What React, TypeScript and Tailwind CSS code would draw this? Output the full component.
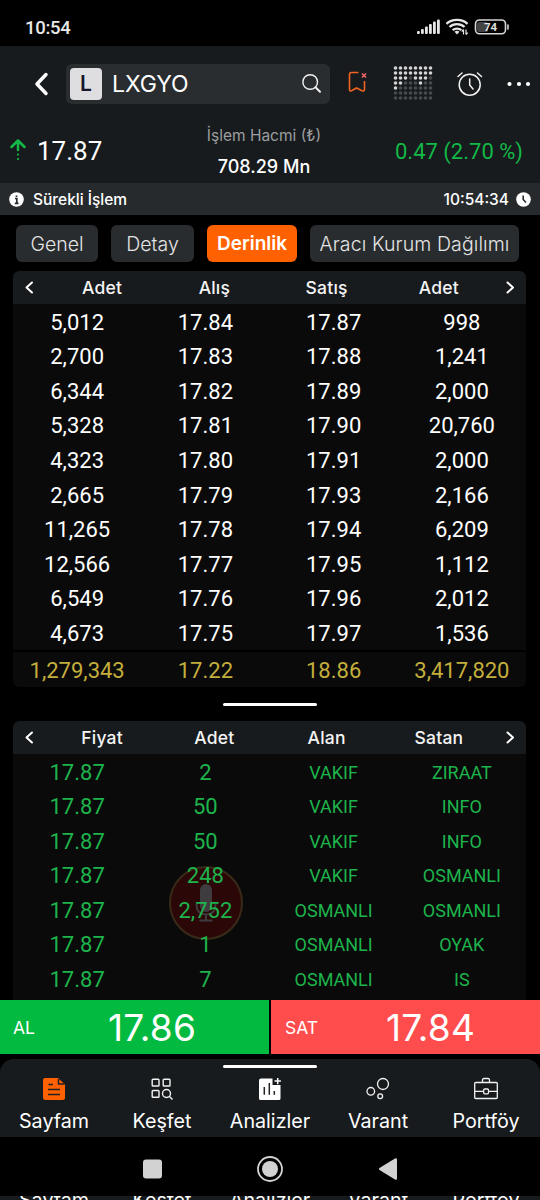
import React from "react";

const bids: string[][] = [
  ["5,012", "17.84", "17.87", "998"],
  ["2,700", "17.83", "17.88", "1,241"],
  ["6,344", "17.82", "17.89", "2,000"],
  ["5,328", "17.81", "17.90", "20,760"],
  ["4,323", "17.80", "17.91", "2,000"],
  ["2,665", "17.79", "17.93", "2,166"],
  ["11,265", "17.78", "17.94", "6,209"],
  ["12,566", "17.77", "17.95", "1,112"],
  ["6,549", "17.76", "17.96", "2,012"],
  ["4,673", "17.75", "17.97", "1,536"],
];

const trades: string[][] = [
  ["17.87", "2", "VAKIF", "ZIRAAT"],
  ["17.87", "50", "VAKIF", "INFO"],
  ["17.87", "50", "VAKIF", "INFO"],
  ["17.87", "248", "VAKIF", "OSMANLI"],
  ["17.87", "2,752", "OSMANLI", "OSMANLI"],
  ["17.87", "1", "OSMANLI", "OYAK"],
  ["17.87", "7", "OSMANLI", "IS"],
];

const dots = ["11111111", "11111111", "11101110", "11000100", "10000000", "00000000", "00000000"];

function StatusIcons() {
  return (
    <svg width="96" height="20" viewBox="0 0 96 20" fill="none">
      <g fill="#e6e6e6">
        <rect x="1" y="14" width="2.800" height="3" rx="1" />
        <rect x="5" y="12" width="2.800" height="5" rx="1" />
        <rect x="9" y="9.5" width="2.800" height="7.500" rx="1" />
        <rect x="13" y="7" width="2.800" height="10" rx="1" />
        <rect x="17" y="4.5" width="2.800" height="12.500" rx="1" />
        <rect x="21" y="2.5" width="2.800" height="14.500" rx="1" />
      </g>
      <g stroke="#e6e6e6" strokeWidth="2.300">
        <path d="M30.500 6.800C36 1.600 46 1.600 51.500 6.800" />
        <path d="M33.500 10C37.500 6.200 44.500 6.200 48.500 10" />
        <path d="M36.700 13.200C39 11 43 11 45.300 13.200" />
      </g>
      <path d="M38.500 14.700Q41 13 43.500 14.700L41 17.500Z" fill="#e6e6e6" />
      <path d="M47.500 12.500V17.500M47.500 12.500L45.700 14.600M50 12.500V17.500M50 17.500L51.700 15.600" stroke="#e6e6e6" strokeWidth="1.200" />
      <rect x="61" y="5" width="11" height="10" rx="2" fill="#444" />
      <rect x="59.500" y="3" width="30" height="13.800" rx="4" stroke="#d6d6d6" strokeWidth="1.600" />
      <path d="M92 8V12" stroke="#d6d6d6" strokeWidth="1.600" strokeLinecap="round" />
      <text x="74.500" y="14" textAnchor="middle" fontSize="11.500" fontWeight="600" fontFamily="Roboto, sans-serif" fill="#e6e6e6">74</text>
    </svg>
  );
}

function Chevron({ right = false }: { right?: boolean }) {
  return (
    <svg width="9" height="13" viewBox="0 0 9 13" fill="none" stroke="#fff" strokeWidth="2" strokeLinecap="round" strokeLinejoin="round">
      <path d={right ? "M1.500 1.500L7 6.500L1.500 11.500" : "M7 1.500L1.500 6.500L7 11.500"} />
    </svg>
  );
}

function TableHeader({ labels }: { labels: string[] }) {
  return (
    <div className="flex h-[33px] items-center rounded-t-[6px] bg-[#171b1e]">
      <div className="flex w-[33px] justify-center"><Chevron /></div>
      <div className="grid flex-1 grid-cols-4 pt-px text-center font-['Inter',sans-serif] text-[17.5px] font-medium leading-[24px] tracking-[0.2px] text-[#f4f4f4]">
        {labels.map((l, i) => <span key={i}>{l}</span>)}
      </div>
      <div className="flex w-[31px] justify-center"><Chevron right /></div>
    </div>
  );
}

function NavIcon({ name }: { name: string }) {
  const p = { width: 26, height: 26, viewBox: "0 0 26 26", fill: "none" } as const;
  if (name === "Sayfam")
    return (
      <svg {...p}>
        <path d="M4 2H17L24 8.500V21.500Q24 24 21.500 24H4.500Q2 24 2 21.500V4Q2 2 4 2Z" fill="#ff6100" />
        <path d="M17.500 3V8H23.500M7.500 8.500H12M7 13.500H19M7 18.500H19" stroke="#202124" strokeWidth="1.500" />
      </svg>
    );
  if (name === "Keşfet")
    return (
      <svg {...p} stroke="#f2f2f2" strokeWidth="1.400">
        <rect x="3.200" y="3.200" width="6.800" height="6.800" rx="0.800" />
        <rect x="14.200" y="3.200" width="6.800" height="6.800" rx="0.800" />
        <rect x="3.200" y="14.500" width="6.800" height="6.800" rx="0.800" />
        <circle cx="17.500" cy="17.500" r="4" />
        <path d="M20.300 20.300L23.500 23.500" />
      </svg>
    );
  if (name === "Analizler")
    return (
      <svg {...p}>
        <path d="M4 2.500H15.500V9H23.500V22.500Q23.500 24 22 24H3.500Q2 24 2 22.500V4.500Q2 2.500 4 2.500Z" fill="#fff" />
        <path d="M7.300 11V18.700M12.300 7V18.700M17.300 15V18.700" stroke="#202427" strokeWidth="1.500" />
        <path d="M20.700 2V8.200M17.500 5.100H23.900" stroke="#fff" strokeWidth="1.500" />
      </svg>
    );
  if (name === "Varant")
    return (
      <svg {...p} stroke="#f2f2f2" strokeWidth="1.300">
        <circle cx="18" cy="8" r="5.500" />
        <circle cx="5.800" cy="15.300" r="3.800" />
        <circle cx="15.200" cy="20.300" r="2.400" />
      </svg>
    );
  return (
    <svg {...p} stroke="#f2f2f2" strokeWidth="1.300">
      <rect x="1.700" y="6.500" width="22.600" height="16" rx="1" />
      <path d="M9.500 6.500V4Q9.500 2.500 11 2.500H15Q16.500 2.500 16.500 4V6.500M2 15.300H10.500M15.500 15.300H24" />
      <rect x="10.700" y="13" width="4.800" height="4.800" rx="1" />
    </svg>
  );
}

const nav = ["Sayfam", "Keşfet", "Analizler", "Varant", "Portföy"];

export default function App() {
  return (
    <div className="flex h-[1200px] w-[540px] flex-col overflow-hidden bg-black font-['Roboto',sans-serif] text-white">
      <div className="flex h-[46px] shrink-0 items-center justify-between bg-black pl-[25px] pr-[28px] pt-[8px]">
        <span className="pt-px text-[18.500px] font-medium leading-[22px] tracking-[-0.3px] text-[#e8e8e8]">10:54</span>
        <StatusIcons />
      </div>

      <header className="flex h-[137px] shrink-0 flex-col bg-[#171b1e]">
        <div className="flex h-[75px] items-center">
          <svg className="ml-[33px] mr-[17px]" width="16" height="26" viewBox="0 0 16 26" fill="none" stroke="#fff" strokeWidth="3.500" strokeLinecap="round" strokeLinejoin="round">
            <path d="M13 3.500L4 13L13 22.500" />
          </svg>
          <div className="flex h-[40px] w-[264px] items-center rounded-[6px] bg-[#292d30] pl-[4px] pr-[8px]">
            <div className="flex size-[32px] items-center justify-center rounded-[4px] bg-[#dedee0] font-['Inter',sans-serif] text-[21px] font-semibold leading-none text-[#15152b]">L</div>
            <span className="ml-[10px] flex-1 font-['Inter',sans-serif] text-[23px] leading-[30px] tracking-[-0.1px]">LXGYO</span>
            <svg width="21" height="21" viewBox="0 0 21 21" fill="none" stroke="#f2f2f2">
              <circle cx="9.200" cy="9" r="7.300" strokeWidth="1.400" />
              <path d="M14.500 14.300L19 18.700" strokeWidth="2" strokeLinecap="round" />
            </svg>
          </div>
          <svg className="ml-[17px] mt-[-3px]" width="22" height="24" viewBox="0 0 22 24" fill="none">
            <path d="M11.500 2.500H4.500Q2.500 2.500 2.500 4.500V19.500Q2.500 21.500 4.500 20.700L9.500 18L15 20.700Q17.500 21.500 17.500 19.500V11" stroke="#ee6420" strokeWidth="1.600" />
            <path d="M15 3.500L19 7.500M19 3.500L15 7.500" stroke="#ee6666" strokeWidth="1.600" />
          </svg>
          <svg className="ml-[24px] mt-[-1px]" width="40" height="36" viewBox="0 0 40 36">
            {dots.flatMap((row, y) => row.split("").map((d, x) => (
              <circle key={`${x}-${y}`} cx={2.5 + x * 5} cy={3 + y * 5} r="1.800" fill={d === "1" ? "#d4d4d4" : "#484b4d"} />
            )))}
          </svg>
          <svg className="ml-[23px]" width="28" height="28" viewBox="0 0 28 28" fill="none" stroke="#f2f2f2" strokeWidth="1.500" strokeLinecap="round">
            <circle cx="13.700" cy="14.700" r="10.500" />
            <path d="M13.700 9V15L17 19M2 6.500L6 3M25.500 6.500L21.500 3" />
          </svg>
          <svg className="ml-[22px]" width="26" height="6" viewBox="0 0 26 6" fill="#fff">
            <circle cx="3.500" cy="3" r="2.100" /><circle cx="13" cy="3" r="2.100" /><circle cx="22" cy="3" r="2.100" />
          </svg>
        </div>
        <div className="grid h-[62px] grid-cols-[190px_148px_1fr] items-center">
          <div className="flex items-center pb-[3px]">
            <svg className="ml-[9px] mr-[10px]" width="18" height="24" viewBox="0 0 18 24" fill="none" stroke="#13b847" strokeWidth="2.500" strokeLinecap="round" strokeLinejoin="round">
              <path d="M2.500 8L9 1.500L15.500 8M9 2V11" /><path d="M9 15.500V15.600M9 20V20.100" strokeWidth="2.200" />
            </svg>
            <span className="text-[26px] leading-[30px]">17.87</span>
          </div>
          <div className="flex flex-col items-center pt-[3px] font-['Inter',sans-serif]">
            <span className="h-[31px] text-[15.500px] leading-[24px] text-[#9c9e9f]">İşlem Hacmi (₺)</span>
            <span className="h-[29px] text-[18px] font-medium leading-[24px]">708.29 Mn</span>
          </div>
          <span className="pb-[2px] pr-[17px] text-right text-[22px] leading-[28px] text-[#13b847]">0.47 (2.70 %)</span>
        </div>
      </header>

      <div className="flex h-[32px] shrink-0 items-center bg-[#272a2d] px-[9px] font-['Inter',sans-serif] text-[15.500px] font-medium leading-[24px]">
        <svg width="15" height="15" viewBox="0 0 15 15"><circle cx="7.500" cy="7.500" r="7.300" fill="#fff" /><path d="M7.500 3.400V4.900M6 6.500H7.800V11.200M5.800 11.300H9.500" stroke="#272a2d" strokeWidth="1.700" fill="none" /></svg>
        <span className="ml-[9px] flex-1 pt-[2px]">Sürekli İşlem</span>
        <span className="pt-[2px]">10:54:34</span>
        <svg className="ml-[7px]" width="15" height="15" viewBox="0 0 15 15"><circle cx="7.500" cy="7.500" r="7.300" fill="#fff" /><path d="M7.200 3.500V7.500L10 10.500" stroke="#272a2d" strokeWidth="1.600" fill="none" /></svg>
      </div>

      <div className="flex h-[56px] shrink-0 items-center pl-[16px] font-['Inter',sans-serif] text-[19.500px] font-light leading-[24px] text-[#e4e4e4]">
        <button className="h-[37px] w-[82px] rounded-[6px] bg-[#292c2f] pt-[2px]">Genel</button>
        <button className="ml-[13px] h-[37px] w-[83px] rounded-[6px] bg-[#292c2f] pt-[2px]">Detay</button>
        <button className="ml-[13px] h-[37px] w-[90px] rounded-[6px] bg-[#ff6100] pt-[2px] text-[19px] font-semibold text-white">Derinlik</button>
        <button className="ml-[13px] h-[37px] w-[209px] whitespace-nowrap rounded-[6px] bg-[#292c2f] pt-[2px] tracking-[0.1px]">Aracı Kurum Dağılımı</button>
      </div>

      <section className="ml-[13px] flex h-[416px] w-[513px] shrink-0 flex-col overflow-hidden rounded-[6px] bg-[#0a0a0a]">
        <TableHeader labels={["Adet", "Alış", "Satış", "Adet"]} />
        <div className="flex h-[346px] flex-col pt-[1.500px]">
          {bids.map((r, i) => (
            <div key={i} className="grid h-[34.550px] shrink-0 grid-cols-4 items-center text-center text-[22px] leading-[26px]">
              {r.map((c, j) => <span key={j}>{c}</span>)}
            </div>
          ))}
        </div>
        <div className="grid h-[37px] grid-cols-4 items-center border-t-2 border-black pt-[2px] text-center text-[22px] leading-[26px] text-[#c4ae3c]">
          <span>1,279,343</span><span>17.22</span><span>18.86</span><span>3,417,820</span>
        </div>
      </section>

      <div className="flex h-[34px] shrink-0 items-center justify-center">
        <div className="h-[3px] w-[94px] rounded-full bg-white" />
      </div>

      <section className="relative ml-[13px] h-[279px] w-[513px] shrink-0 overflow-hidden rounded-t-[6px] bg-[#0a0a0a]">
        <div className="absolute left-[156px] top-[145px] size-[74px]">
          <svg width="74" height="74" viewBox="0 0 74 74" fill="none">
            <circle cx="37" cy="37" r="36" fill="#2b0708" stroke="#382b18" strokeWidth="2" />
            <rect x="31" y="18" width="12" height="28" rx="6" fill="#3f3c40" />
            <path d="M27.500 38V39Q28 48.500 37 48.500Q46 48.500 46.500 39V38M37 49V54M30.500 54.500H43.500" stroke="#3f3c40" strokeWidth="2" />
          </svg>
        </div>
        <TableHeader labels={["Fiyat", "Adet", "Alan", "Satan"]} />
        <div className="relative flex flex-col pt-[1.500px] text-[#1eb44c]">
          {trades.map((r, i) => (
            <div key={i} className="grid h-[34.500px] shrink-0 grid-cols-4 items-center text-center text-[22px] leading-[26px]">
              <span>{r[0]}</span><span>{r[1]}</span>
              <span className="text-[18px]">{r[2]}</span><span className="text-[18px]">{r[3]}</span>
            </div>
          ))}
        </div>
      </section>

      <div className="flex h-[54px] shrink-0 items-center gap-[2px] font-['Inter',sans-serif]">
        <div className="flex h-full w-[269px] items-center bg-[#02ba40]">
          <span className="w-[95px] pl-[13px] pt-px text-[17.500px] leading-none">AL</span>
          <span className="ml-[13px] text-[37px] leading-none tracking-[0.2px]">17.86</span>
        </div>
        <div className="flex h-full w-[269px] items-center bg-[#ff4d4d]">
          <span className="w-[102px] pl-[14px] pt-px text-[17.500px] leading-none">SAT</span>
          <span className="ml-[13px] text-[37px] leading-none tracking-[0.2px]">17.84</span>
        </div>
      </div>

      <div className="h-[5px] shrink-0" />
      <nav className="flex h-[78px] shrink-0 flex-col rounded-t-[14px] bg-[#171b1e]">
        <div className="mt-[6px] h-[3px] w-[94px] self-center rounded-full bg-white" />
        <div className="mt-[8px] grid grid-cols-5 font-['Inter',sans-serif]">
          {nav.map((n) => (
            <div key={n} className="flex flex-col items-center">
              <NavIcon name={n} />
              <span className="mt-[7px] text-[19.700px] leading-[24px]">{n}</span>
            </div>
          ))}
        </div>
      </nav>

      <div className="flex h-[59px] shrink-0 items-center justify-center bg-black pt-[4px]">
        <svg width="260" height="30" viewBox="0 0 260 30" fill="#d2d2d2">
          <rect x="3" y="5.500" width="19" height="19" rx="3" />
          <circle cx="130" cy="15" r="12" fill="none" stroke="#d2d2d2" strokeWidth="1.800" />
          <circle cx="130" cy="15" r="8" />
          <path d="M255 4.500Q257 3.500 257 5.500V24.500Q257 26.500 255 25.500L239.500 16Q238 15 239.500 14Z" />
        </svg>
      </div>
      <div className="grid h-[4px] shrink-0 grid-cols-5 overflow-hidden bg-[#171b1e] text-center font-['Inter',sans-serif] text-[19.700px] leading-[8px]">
        {nav.map((n) => <span key={n}>{n}</span>)}
      </div>
    </div>
  );
}
